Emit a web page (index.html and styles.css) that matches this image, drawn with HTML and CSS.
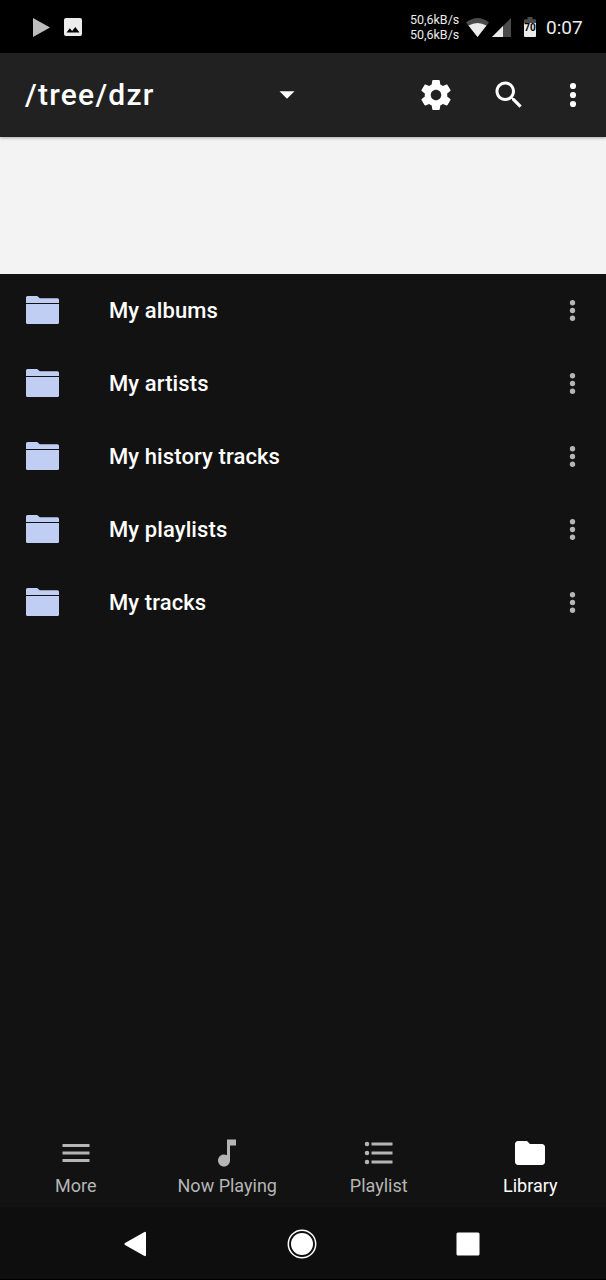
FILE: index.html
```html
<!DOCTYPE html>
<html lang="en">
<head>
    <meta charset="UTF-8">
    <meta name="viewport" content="width=device-width, initial-scale=1.0">
    <title>Library</title>
    <link rel="stylesheet" href="styles.css">
</head>
<body>
    <svg class="symbols" aria-hidden="true">
        <symbol id="folder" viewBox="0 0 33 28">
            <path d="M1.500 0h9.700l2.600 2.300H31.500Q33 2.300 33 3.800V7H0V1.500Q0 0 1.500 0z"/>
            <path d="M0 8h33v18.500q0 1.500-1.500 1.500h-30Q0 28 0 26.500z"/>
        </symbol>
        <symbol id="more" viewBox="0 0 24 24">
            <circle cx="12" cy="6" r="2.050"/>
            <circle cx="12" cy="12" r="2.050"/>
            <circle cx="12" cy="18" r="2.050"/>
        </symbol>
    </svg>

    <div class="status-bar">
        <svg class="status-play" viewBox="0 0 17 19"><path d="M0 0l17 9.500L0 19z"/></svg>
        <svg class="status-image" viewBox="0 0 18 18">
            <path fill-rule="evenodd" d="M2 0h14q2 0 2 2v14q0 2-2 2H2q-2 0-2-2V2Q0 0 2 0zM2.500 14.500h13l-4.200-5.500-3.200 4-2.300-2.700z"/>
        </svg>
        <div class="net-speed">
            <span>50,6kB/s</span>
            <span>50,6kB/s</span>
        </div>
        <svg class="status-wifi" viewBox="0 0 23 19">
            <path class="dim" d="M0 4.500Q11.500-4.500 23 4.500L11.500 19z"/>
            <path d="M2.500 7.500Q11.500 2.500 20.500 7.500L11.500 19z"/>
        </svg>
        <svg class="status-signal" viewBox="0 0 19 19">
            <path class="dim" d="M0 19L19 0v19z"/>
            <path d="M0 19L11 8v11z"/>
        </svg>
        <div class="battery">
            <svg viewBox="0 0 12 20">
                <path class="dim" d="M1 2.200h2.500V0h5v2.200H11q1 0 1 1V7H0V3.200q0-1 1-1z"/>
                <path d="M0 6h12v13q0 1-1 1H1q-1 0-1-1z"/>
            </svg>
            <span>70</span>
        </div>
        <span class="clock">0:07</span>
    </div>

    <header class="toolbar">
        <div class="path-select">
            <h1>/tree/dzr</h1>
            <svg class="icon" viewBox="0 0 24 24"><path d="M7 9.500l5 5 5-5z"/></svg>
        </div>
        <svg class="icon settings" viewBox="0 0 24 24">
            <path d="M19.430 12.980c.04-.32.07-.64.07-.98s-.03-.66-.07-.98l2.110-1.650c.19-.15.24-.42.12-.64l-2-3.460c-.12-.22-.39-.3-.61-.22l-2.490 1c-.52-.4-1.080-.73-1.690-.98l-.38-2.650C14.460 2.180 14.250 2 14 2h-4c-.25 0-.46.18-.49.42l-.38 2.650c-.61.25-1.170.59-1.690.98l-2.490-1c-.23-.09-.49 0-.61.22l-2 3.460c-.13.22-.07.49.12.64l2.110 1.650c-.04.32-.07.65-.07.98s.03.66.07.98l-2.110 1.650c-.19.15-.24.42-.12.64l2 3.460c.12.22.39.3.61.22l2.490-1c.52.4 1.080.73 1.690.98l.38 2.650c.03.24.24.42.49.42h4c.25 0 .46-.18.49-.42l.38-2.650c.61-.25 1.170-.59 1.690-.98l2.490 1c.23.09.49 0 .61-.22l2-3.460c.12-.22.07-.49-.12-.64l-2.110-1.650zM12 15.500c-1.930 0-3.500-1.570-3.500-3.500s1.570-3.500 3.500-3.500 3.500 1.570 3.500 3.500-1.570 3.500-3.500 3.500z"/>
        </svg>
        <svg class="icon search" viewBox="0 0 24 24">
            <path d="M15.500 14h-.79l-.28-.27C15.410 12.590 16 11.110 16 9.500 16 5.910 13.090 3 9.500 3S3 5.910 3 9.500 5.910 16 9.500 16c1.610 0 3.090-.59 4.230-1.570l.27.28v.79l5 4.990L20.490 19l-4.990-5zm-6 0C7.010 14 5 11.990 5 9.500S7.010 5 9.500 5 14 7.010 14 9.500 11.990 14 9.500 14z"/>
        </svg>
        <svg class="icon"><use href="#more"/></svg>
    </header>

    <div class="banner"></div>

    <main class="folder-list">
        <div class="row">
            <svg class="folder"><use href="#folder"/></svg>
            <span class="name">My albums</span>
            <svg class="row-more"><use href="#more"/></svg>
        </div>
        <div class="row">
            <svg class="folder"><use href="#folder"/></svg>
            <span class="name">My artists</span>
            <svg class="row-more"><use href="#more"/></svg>
        </div>
        <div class="row">
            <svg class="folder"><use href="#folder"/></svg>
            <span class="name">My history tracks</span>
            <svg class="row-more"><use href="#more"/></svg>
        </div>
        <div class="row">
            <svg class="folder"><use href="#folder"/></svg>
            <span class="name">My playlists</span>
            <svg class="row-more"><use href="#more"/></svg>
        </div>
        <div class="row">
            <svg class="folder"><use href="#folder"/></svg>
            <span class="name">My tracks</span>
            <svg class="row-more"><use href="#more"/></svg>
        </div>
    </main>

    <nav class="tabs">
        <div class="tab">
            <svg class="icon" viewBox="0 0 24 24"><path d="M3 18h18v-2H3v2zm0-5h18v-2H3v2zm0-7v2h18V6H3z"/></svg>
            <span>More</span>
        </div>
        <div class="tab">
            <svg class="icon" viewBox="0 0 24 24"><path d="M12 3v10.550c-.59-.34-1.270-.55-2-.55-2.210 0-4 1.790-4 4s1.790 4 4 4 4-1.790 4-4V7h4V3h-6z"/></svg>
            <span>Now Playing</span>
        </div>
        <div class="tab">
            <svg class="icon" viewBox="0 0 24 24">
                <circle cx="4" cy="6" r="1.500"/>
                <circle cx="4" cy="12" r="1.500"/>
                <circle cx="4" cy="18" r="1.500"/>
                <path d="M7 5h14v2H7zM7 11h14v2H7zM7 17h14v2H7z"/>
            </svg>
            <span>Playlist</span>
        </div>
        <div class="tab active">
            <svg class="icon" viewBox="0 0 24 24"><path d="M10 4H4c-1.100 0-1.990.9-1.990 2L2 18c0 1.100.9 2 2 2h16c1.100 0 2-.9 2-2V8c0-1.100-.9-2-2-2h-8l-2-2z"/></svg>
            <span>Library</span>
        </div>
    </nav>

    <div class="nav-bar">
        <svg viewBox="0 0 30 30"><path d="M5 14.100L24 3.200q2-1 2 1v21.600q0 2-2 1L5 15.900q-1.500-.9 0-1.800z"/></svg>
        <svg viewBox="0 0 30 30">
            <circle class="ring" cx="15" cy="15" r="13.700"/>
            <circle cx="15" cy="15" r="11"/>
        </svg>
        <svg viewBox="0 0 30 30"><rect x="3.500" y="3.500" width="23" height="23" rx="1.500"/></svg>
    </div>
</body>
</html>
```
FILE: styles.css
```css
:root {
    --background: #121212;
    --toolbar: #212121;
    --muted: #b5b5b5;
    --folder: #c0cef3;
}

* {
    margin: 0;
    padding: 0;
    box-sizing: border-box;
}

body {
    width: 606px;
    height: 1280px;
    display: flex;
    flex-direction: column;
    overflow: hidden;
    background: var(--background);
    color: #fff;
    font-family: Roboto, "Liberation Sans", sans-serif;
}

svg {
    display: block;
    flex: none;
    fill: currentColor;
}

.symbols {
    display: none;
}

.icon {
    width: 36px;
    height: 36px;
}

/* Status bar */
.status-bar {
    height: 53px;
    display: flex;
    align-items: center;
    padding: 1px 23px 0 33px;
    background: #000;
    color: #ececec;
}

.status-bar .dim {
    fill: #4b4b4b;
}

.status-play {
    width: 17px;
    height: 19px;
    margin-right: 14px;
    color: #bdbdbd;
}

.status-image {
    width: 18px;
    height: 18px;
}

.net-speed {
    display: flex;
    flex-direction: column;
    width: 49px;
    margin-left: auto;
    font-size: 12.5px;
    line-height: 15px;
    white-space: nowrap;
}

.status-wifi {
    width: 23px;
    height: 19px;
    margin-left: 7px;
}

.status-signal {
    width: 19px;
    height: 19px;
    margin-left: 3px;
}

.battery {
    position: relative;
    width: 12px;
    height: 20px;
    margin-left: 13px;
}

.battery svg {
    width: 12px;
    height: 20px;
}

.battery span {
    position: absolute;
    inset: 5px -2px auto;
    color: #000;
    font-size: 10px;
    font-weight: 700;
    line-height: 12px;
    text-align: center;
}

.clock {
    width: 37px;
    margin-left: 10px;
    font-size: 19px;
    white-space: nowrap;
}

/* Toolbar */
.toolbar {
    position: relative;
    height: 84px;
    display: flex;
    align-items: center;
    padding: 0 15px 0 25px;
    background: var(--toolbar);
    box-shadow: 0 1px 3px rgba(0, 0, 0, 0.3);
}

.path-select {
    width: 280px;
    display: flex;
    align-items: center;
    justify-content: space-between;
}

.path-select h1 {
    font-size: 30px;
    font-weight: 500;
    line-height: 36px;
    letter-spacing: 1.25px;
}

.settings {
    margin-left: auto;
    margin-right: 37px;
}

.search {
    margin-right: 28px;
}

.banner {
    height: 137px;
    background: #f3f3f3;
}

/* Folder list */
.folder-list {
    flex: 1;
}

.row {
    height: 73px;
    display: flex;
    align-items: center;
    padding: 0 18px 0 26px;
}

.folder {
    width: 33px;
    height: 28px;
    margin-bottom: 1px;
    color: var(--folder);
}

.name {
    flex: 1;
    margin-left: 50px;
    font-size: 22px;
    font-weight: 500;
    letter-spacing: 0.1px;
}

.row-more {
    width: 31px;
    height: 31px;
    color: var(--muted);
}

/* Bottom tabs */
.tabs {
    height: 84px;
    display: grid;
    grid-template-columns: repeat(4, 1fr);
    padding-top: 12px;
}

.tab {
    display: flex;
    flex-direction: column;
    align-items: center;
    color: var(--muted);
    font-size: 18px;
    line-height: 30px;
}

.tab.active {
    color: #fff;
}

/* System navigation */
.nav-bar {
    height: 73px;
    display: flex;
    align-items: center;
    justify-content: space-between;
    padding: 2px 123px 0 120px;
    background: #0e0e0e;
    border-bottom: 1px solid #000;
}

.nav-bar svg {
    width: 30px;
    height: 30px;
}

.nav-bar .ring {
    fill: none;
    stroke: currentColor;
    stroke-width: 1.5;
}
```
